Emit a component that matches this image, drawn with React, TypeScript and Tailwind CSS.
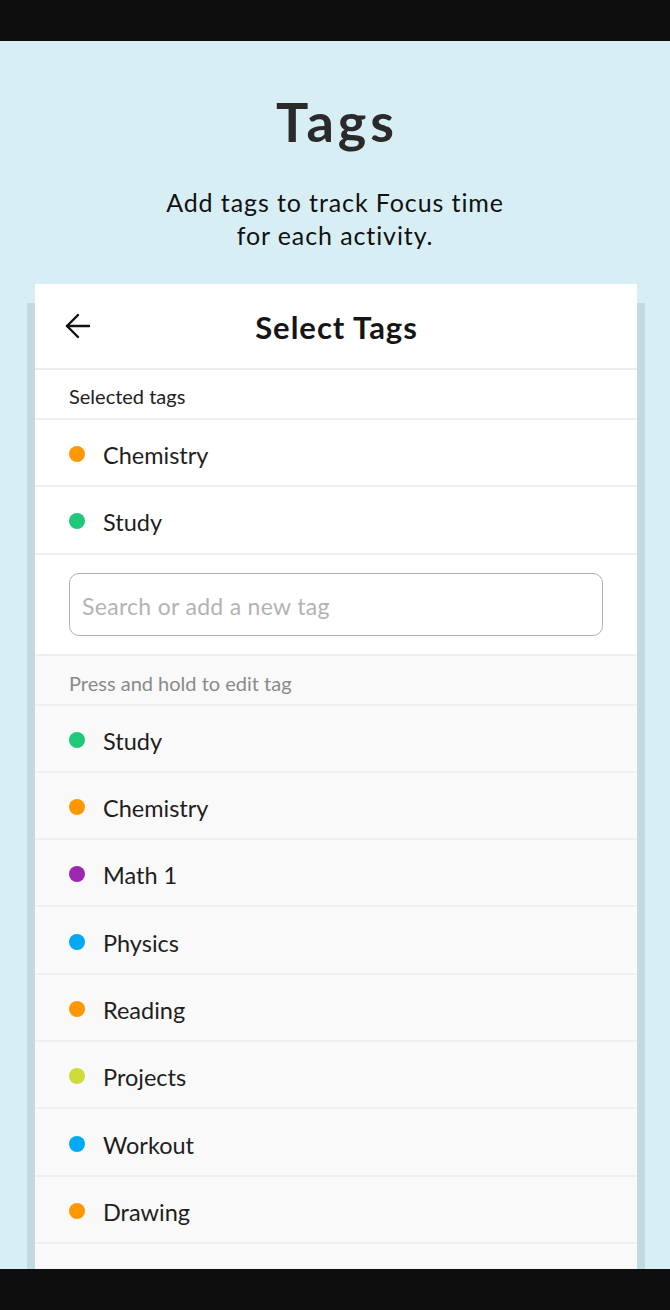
import React from "react";

type Tag = { name: string; color: string };

const selected: Tag[] = [
  { name: "Chemistry", color: "bg-[#ff9800]" },
  { name: "Study", color: "bg-[#1ec97a]" },
];

const allTags: Tag[] = [
  { name: "Study", color: "bg-[#1ec97a]" },
  { name: "Chemistry", color: "bg-[#ff9800]" },
  { name: "Math 1", color: "bg-[#9c27b0]" },
  { name: "Physics", color: "bg-[#03a9f4]" },
  { name: "Reading", color: "bg-[#ff9800]" },
  { name: "Projects", color: "bg-[#cddc39]" },
  { name: "Workout", color: "bg-[#03a9f4]" },
  { name: "Drawing", color: "bg-[#ff9800]" },
];

const TagRow = ({ tag }: { tag: Tag }) => (
  <div className="flex h-[67.3px] shrink-0 items-center gap-[18px] border-b-2 border-[#efefef] pl-[34px]">
    <span className={`mt-[3px] h-4 w-4 rounded-full ${tag.color}`} />
    <span className="pt-[5px] text-[23.5px] leading-[30px] text-[#1e1e1e]">{tag.name}</span>
  </div>
);

const BackArrow = () => (
  <svg width="26" height="26" viewBox="0 0 26 26" fill="none" stroke="#111" strokeWidth="2.4" strokeLinecap="round" strokeLinejoin="round">
    <path d="M24 13H2" />
    <path d="M13 2 2 13l11 11" />
  </svg>
);

export default function App() {
  return (
    <div className="flex h-[1310px] w-[670px] flex-col overflow-hidden bg-[#d8eef5] font-['Lato',sans-serif]">
      <div className="h-[41px] shrink-0 bg-[#0e0e0e]" />

      <div className="flex min-h-0 flex-1 flex-col overflow-hidden">
        <h1 className="mt-[54px] pl-[4px] text-center text-[54px] font-bold leading-none tracking-[4px] text-[#2a2a2a]">
          Tags
        </h1>
        <p className="mt-[37px] text-center text-[25px] leading-[33px] tracking-[0.9px] text-[#111]">
          Add tags to track Focus time
          <br />
          for each activity.
        </p>

        <div className="mt-[51px] ml-[27px] mr-[25px] flex flex-1 flex-col bg-[#c3dbe0] px-[8px]">
          <div className="-mt-[19px] flex flex-1 flex-col overflow-hidden bg-white">
            <div className="relative flex h-[86px] shrink-0 items-center justify-center border-b-2 border-[#ececec]">
              <div className="absolute left-[30px] top-[29px]">
                <BackArrow />
              </div>
              <span className="pl-[1px] pt-[2px] text-[31px] font-bold tracking-[1px] text-[#151515]">Select Tags</span>
            </div>

            <div className="flex h-[50px] shrink-0 items-center border-b-2 border-[#efefef] pl-[34px] pt-[4px] text-[20px] text-[#222]">
              Selected tags
            </div>
            {selected.map((t) => (
              <TagRow key={t.name} tag={t} />
            ))}

            <div className="flex h-[101px] shrink-0 items-center border-b-2 border-[#efefef] px-[34px]">
              <div className="flex h-[63px] w-full items-center rounded-[10px] border-[1.5px] border-[#b0b0b0] px-[12px] pt-[4px] text-[23px] tracking-[0.3px] text-[#b3b3b3]">
                Search or add a new tag
              </div>
            </div>

            <div className="flex flex-1 flex-col bg-[#f9f9f9]">
              <div className="flex h-[50px] shrink-0 items-center border-b-2 border-[#efefef] pl-[34px] pt-[6px] text-[20px] text-[#8a8a8a]">
                Press and hold to edit tag
              </div>
              {allTags.map((t) => (
                <TagRow key={t.name} tag={t} />
              ))}
            </div>
          </div>
        </div>
      </div>

      <div className="h-[41px] shrink-0 bg-[#0e0e0e]" />
    </div>
  );
}
